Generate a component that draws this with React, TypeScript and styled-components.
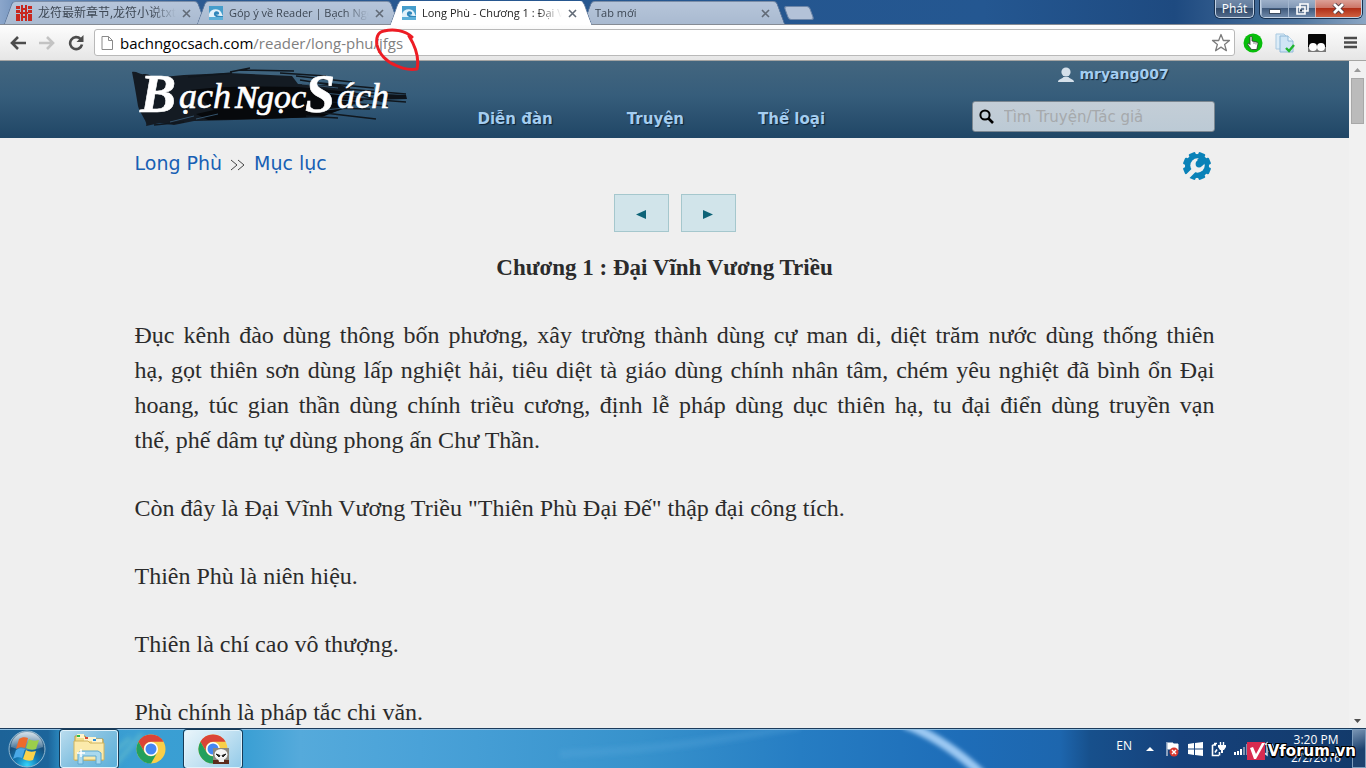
import React from "react";
import styled, { createGlobalStyle } from "styled-components";

const ui = `"Open Sans", "Noto Sans", "Noto Sans CJK SC", sans-serif`;
const wide = `"DejaVu Sans", Verdana, sans-serif`;
const serif = `"Palatino Linotype", "Liberation Serif", serif`;

const Global = createGlobalStyle`
  *, *::before, *::after { box-sizing: border-box; }
  body { margin: 0; overflow: hidden; background: #efefef; }
  button { border: 0; padding: 0; margin: 0; background: none; font: inherit; color: inherit; cursor: pointer; }
  a { text-decoration: none; color: inherit; }
  svg { display: block; flex: none; }
`;

const Desktop = styled.div`
  position: relative;
  display: flex;
  flex-direction: column;
  height: 100vh;
  overflow: hidden;
  font-family: ${ui};
`;

/* ---------- window frame and tabs ---------- */
const TabStrip = styled.header`
  display: flex;
  flex: none;
  height: 25px;
  padding-left: 8px;
  background: linear-gradient(90deg, #8ba6cb 0, #6f90bb 20px, #2c5a92 190px, #25568f 50%, #245791 72%, #1e4a80 86%, #4e759f 95%, #8ba6c4 100%);
  border-bottom: 1px solid #858b94;
`;

const Tab = styled.div<{ $active?: boolean }>`
  position: relative;
  z-index: ${(p) => (p.$active ? 2 : 1)};
  display: flex;
  align-items: center;
  gap: 6px;
  width: 193px;
  height: 25px;
  padding: 1px 10px 0 8px;
  color: ${(p) => (p.$active ? "#222" : "#3d4754")};
  &::before, &::after {
    content: "";
    position: absolute;
    z-index: -1;
    top: 1px;
    bottom: ${(p) => (p.$active ? "0" : "1px")};
    background: ${(p) => (p.$active ? "#fff" : "linear-gradient(#b6c5da, #a9bad0)")};
    border-top: 1px solid ${(p) => (p.$active ? "#fff" : "#7c8ea8")};
  }
  &::before {
    left: 0;
    width: 65%;
    transform: skewX(-20deg);
    border-left: 1px solid #60789a;
    border-radius: 4px 0 0 0;
  }
  &::after {
    right: -1px;
    width: 54%;
    transform: skewX(20deg);
    border-right: 1px solid #60789a;
    border-radius: 0 4px 0 0;
  }
`;

const TabLabel = styled.button<{ $large?: boolean }>`
  flex: 1;
  height: 20px;
  overflow: hidden;
  font-size: ${(p) => (p.$large ? "12px" : "11px")};
  line-height: 20px;
  text-align: left;
  white-space: nowrap;
  mask-image: linear-gradient(90deg, #000 82%, transparent);
`;

const NewTab = styled.button`
  width: 26px;
  height: 14px;
  margin: 6px 0 0 6px;
  background: #b3c2d8;
  border: 1px solid #6d86a8;
  border-radius: 3px;
  transform: skewX(20deg);
`;

const WindowButtons = styled.div`
  display: flex;
  margin: 0 4px 0 auto;
  height: 18px;
  color: #fff;
  font-size: 12px;
`;

const UserBadge = styled.button`
  width: 39px;
  margin-right: 6px;
  background: linear-gradient(#7189a8 0, #5d7899 50%, #2f4868 50%, #51698a);
  border: 1px solid #c3d2e4;
  border-top: 0;
  border-radius: 0 0 5px 5px;
  box-shadow: 0 0 0 1px #17304f;
  line-height: 16px;
`;

const FrameGroup = styled.div`
  display: flex;
  border: 1px solid #c3d2e4;
  border-top: 0;
  border-radius: 0 0 5px 5px;
  box-shadow: 0 0 0 1px #17304f;
  overflow: hidden;
`;

const FrameButton = styled.button<{ $close?: boolean }>`
  display: grid;
  place-items: center;
  width: ${(p) => (p.$close ? "46px" : "27px")};
  border-left: ${(p) => (p.$close ? "1px solid #e0b0a8" : "1px solid #a3b6ce")};
  background: ${(p) =>
    p.$close
      ? "linear-gradient(#dca097 0, #cb7263 50%, #b02f18 50%, #cf6040)"
      : "linear-gradient(#9db0c9 0, #7f96b4 50%, #405a7c 50%, #6d87a8)"};
`;

/* ---------- toolbar ---------- */
const Toolbar = styled.nav`
  display: flex;
  align-items: center;
  flex: none;
  height: 36px;
  padding: 0 6px 0 8px;
  background: linear-gradient(#fdfdfd, #e6e6e6);
  border-bottom: 1px solid #a5a5a3;
`;

const ToolButton = styled.button<{ $gap?: number }>`
  display: grid;
  place-items: center;
  width: 20px;
  height: 24px;
  margin-right: ${(p) => p.$gap ?? 9}px;
`;

const AddressBox = styled.form`
  position: relative;
  display: flex;
  align-items: center;
  flex: 1;
  height: 27px;
  margin: 0 8px 0 1px;
  padding: 0 3px 0 6px;
  background: #fff;
  border: 1px solid #b9b9b9;
  border-radius: 3px;
`;

const Address = styled.span`
  flex: 1;
  margin-left: 6px;
  color: #000;
  font-size: 15px;
  line-height: 24px;
  white-space: nowrap;
  span { color: #7f7f7f; }
`;

const InkRing = styled.svg`
  position: absolute;
  z-index: 5;
  left: 278px;
  top: -2px;
  pointer-events: none;
`;

/* ---------- web page ---------- */
const Viewport = styled.div`
  display: flex;
  flex: 1;
  min-height: 0;
`;

const Page = styled.div`
  flex: 1;
  overflow: hidden;
  background: #efefef;
`;

const SiteHeader = styled.header`
  height: 77px;
  background: linear-gradient(#43667f, #365d7b 45%, #204666);
  font-family: ${wide};
`;

const HeaderInner = styled.div`
  display: flex;
  max-width: 1080px;
  height: 77px;
  margin: 0 auto;
`;

const Logo = styled.a`
  width: 280px;
  margin: 3px 0 0 -5px;
`;

const SiteNav = styled.nav`
  display: flex;
  align-items: flex-end;
  gap: 74px;
  margin-left: 68px;
  padding-bottom: 9px;
`;

const headerText = `
  color: #a4cdf0;
  font-weight: bold;
  line-height: 20px;
  text-shadow: 1px 1px 1px #0c2135;
`;

const NavLink = styled.a`
  ${headerText}
  font-size: 15px;
`;

const Account = styled.div`
  display: flex;
  flex-direction: column;
  width: 243px;
  margin-left: auto;
  padding-top: 3px;
`;

const UserLink = styled.a`
  ${headerText}
  display: flex;
  align-items: center;
  gap: 6px;
  margin-left: 86px;
  font-size: 14px;
`;

const SearchBox = styled.label`
  display: flex;
  align-items: center;
  gap: 10px;
  height: 31px;
  margin-top: 17px;
  padding: 0 6px;
  background: linear-gradient(#c4ced7, #bccad5);
  border: 1px solid #7b8791;
  border-radius: 3px;
`;

const SearchInput = styled.input`
  flex: 1;
  min-width: 0;
  padding: 0;
  background: none;
  border: 0;
  outline: 0;
  font-family: ${wide};
  font-size: 15px;
  &::placeholder { color: #a6a9ac; opacity: 1; }
`;

const Reader = styled.main`
  max-width: 1080px;
  margin: 0 auto;
  padding-top: 14px;
`;

const ReaderTop = styled.div`
  display: flex;
  justify-content: space-between;
  height: 28px;
  padding-right: 4px;
`;

const Crumbs = styled.nav`
  display: flex;
  gap: 8px;
  color: #4a4a4a;
  font-family: ${wide};
  font-size: 19px;
  line-height: 22px;
  a { color: #175fb4; }
  svg { margin-top: 7px; }
`;

const Pager = styled.div`
  display: flex;
  justify-content: center;
  gap: 12px;
  margin-top: 14px;
`;

const PagerButton = styled.button`
  display: grid;
  place-items: center;
  width: 55px;
  height: 38px;
  padding-top: 3px;
  background: #d1e4ea;
  border: 1px solid #a5c7cd;
`;

const Chapter = styled.article`
  color: #2b2b2b;
  font-family: ${serif};
  font-size: 24px;
  line-height: 35px;
`;

const ChapterTitle = styled.h1`
  margin: 18px 0 33px;
  padding-right: 20px;
  font-size: 23px;
  line-height: 35px;
  text-align: center;
`;

const Paragraph = styled.p`
  margin: 0 0 33px;
`;

const Justified = styled.span`
  display: block;
  text-align: justify;
  text-align-last: justify;
`;

const ScrollTrack = styled.div`
  display: flex;
  flex-direction: column;
  align-items: center;
  flex: none;
  width: 17px;
  padding: 7px 0 5px;
  background: #f1f1f1;
`;

const ScrollThumb = styled.div`
  width: 13px;
  height: 46px;
  margin: 6px 0 auto;
  background: #bbb;
  border: 1px solid #a8a8a8;
`;

/* ---------- taskbar ---------- */
const Taskbar = styled.footer`
  position: relative;
  display: flex;
  align-items: center;
  flex: none;
  height: 40px;
  border-top: 1px solid #1c3c5c;
  box-shadow: inset 0 1px 0 #8fbfe2;
  background: linear-gradient(90deg, #1d6398 0, #1c659b 48px, #2f93c9 64px, #3b9fd3 130px, #389ed3 240px, #55aadb 300px, #4aa2d8 420px, #3792cc 640px, #267dc3 800px, #1e6db8 960px, #1d66ae 1060px, #17508c 1090px, #16417b 1180px, #123a6a 100%);
`;

const Swoosh = styled.svg`
  position: absolute;
  top: 1px;
  left: 0;
`;

const TaskItem = styled.button<{ $state?: "open" | "active" }>`
  position: relative;
  display: grid;
  place-items: center;
  width: 58px;
  height: 38px;
  margin-right: 4px;
  border: 1px solid ${(p) => (p.$state ? "#e0f2fb" : "transparent")};
  border-radius: 3px;
  box-shadow: ${(p) => (p.$state ? "0 0 0 1px #173b57" : "none")};
  background: ${(p) =>
    p.$state === "active"
      ? "linear-gradient(135deg, #e9f5fb 0, #c3e2f2 50%, #94cbe9)"
      : p.$state === "open"
      ? "linear-gradient(135deg, #b9dcee 0, #86c2e1 45%, #5cb0da)"
      : "none"};
`;

const StartButton = styled.button`
  position: relative;
  margin: 0 14px 0 8px;
`;

const Tray = styled.div`
  position: relative;
  display: flex;
  align-items: center;
  height: 39px;
  margin-left: auto;
  color: #fff;
  font-size: 12px;
`;

const Language = styled.button`
  margin: 0 14px 6px 0;
  font-size: 12px;
`;

const TrayIcons = styled.div`
  display: flex;
  align-items: center;
  gap: 8px;
`;

const Clock = styled.time`
  display: flex;
  flex-direction: column;
  align-items: center;
  width: 76px;
  padding-left: 4px;
  line-height: 18px;
  font-size: 12px;
`;

const ShowDesktop = styled.button`
  width: 14px;
  height: 39px;
  border: 1px solid #7d9dbd;
  background: linear-gradient(160deg, #7894b3, #1d426f 55%);
`;

const Watermark = styled.div`
  position: absolute;
  right: 10px;
  bottom: 7px;
  display: flex;
  align-items: center;
  gap: 3px;
  color: #fff;
  font: bold 15px/20px ${wide};
  text-shadow: -1px -1px #000, 1px -1px #000, -1px 1px #000, 1px 1px #000, 0 2px #000;
`;

/* ---------- drawings ---------- */
const SiteIcon = () => (
  <svg width="14" height="14" viewBox="0 0 14 14">
    <rect width="14" height="14" fill="#459dcb" />
    <path d="M0 8C1 4 6 2 10 4c3 2 3 5 4 6v1H0Z" fill="#e1f1fa" />
    <path d="M5 7c1-3 6-2 5 1-1 1-2 1-3 0 1 2 4 2 7 2v2c-5 0-10-1-9-5Z" fill="#2f86ba" />
    <path d="M0 11h14v3H0z" fill="#5cafd8" />
  </svg>
);

const SealIcon = () => (
  <svg width="16" height="16" viewBox="0 0 16 16">
    <path d="M0 1h4v3H0zM0 5h4v3H0zM0 9h4v7H0zM5 0h2v7H5zM9 0h2v7H9zM12 1h4v3h-4zM12 5h4v3h-4zM12 9h4v7h-4zM4 7h8v2H4zM5 9h2v7H5zM9 9h2v7H9zM7 3h2v2H7zM7 11h2v2H7z" fill="#c8281f" />
  </svg>
);

const CloseIcon = () => (
  <svg width="9" height="9" viewBox="0 0 9 9">
    <path d="m1 1 7 7M8 1 1 8" stroke="#626b77" strokeWidth="1.6" />
  </svg>
);

const CursorHand = () => (
  <svg width="20" height="20" viewBox="0 0 20 20">
    <circle cx="10" cy="10" r="9.5" fill="#07bd0b" />
    <path d="M7 4.500c0-1.500 2-1.500 2 0V8l5 1.200c1 .3 1 1 .9 2L13.800 16.500H8.500L5 12c-.8-1.500.6-2 1.300-1.200L7 11.500Z" fill="#fff" stroke="#333" strokeWidth=".8" />
    <path d="M11 9v2M13 9.500v2" stroke="#555" strokeWidth=".7" />
  </svg>
);

const CopyCheck = () => (
  <svg width="20" height="20" viewBox="0 0 20 20">
    <path d="M1 1h8l3 3v12H1Z" fill="#dcecf7" stroke="#a9c9e1" />
    <path d="M5 3h8l5 5v11H5Z" fill="#cfe5f5" stroke="#8eb8d8" />
    <path d="M13 3v5h5" fill="#eff8fd" stroke="#8eb8d8" />
    <path d="m11 15 3 3 5-6" fill="none" stroke="#20b52e" strokeWidth="2.400" />
  </svg>
);

const DarkEyes = () => (
  <svg width="18" height="18" viewBox="0 0 18 18">
    <rect width="18" height="18" rx="1" fill="#060606" />
    <path d="M0 13h18v5H0z" fill="#777" />
    <circle cx="5" cy="13" r="4" fill="#fff" />
    <circle cx="13" cy="13" r="4" fill="#fff" />
  </svg>
);

const BrushLogo = () => (
  <svg width="280" height="64" viewBox="0 0 280 64">
    <path d="M2 8c5-1 8 3 12 2 4 0 7 1 8 4l32-3 44-2 64 3 6 8 44 2 16 9-8 12-32 10-84 3-40 1-20 4-14-2-14 3C18 58 10 50 8 42 6 30 4 18 2 8Z" fill="#141b23" />
    <path d="M60 26c30-4 70-4 108-3l52 5 14 8-22 9-20 8-60 2-54 1-12-6 18-4Z" fill="#07090c" />
    <path d="M100 8l20-4M110 6l54 1M150 9l46 3M166 12l56 6M170 16l50 8M190 19l54 5M204 24l72 6M214 29l62 3M208 33l68 5M200 38l58 4M192 44l48 1M186 48l60 7M176 52l32 2M214 26l40 12M54 58l-30 3M58 13l44-4" fill="none" stroke="#10171e" strokeWidth="1.600" />
    <path d="M246 30l30 1 1 4-36 1Z" fill="#0d131a" />
    <path d="M172 20l36 4M184 28l50 5M196 46l26-3M208 36l30 2M40 58l24-6M66 55l22-5" fill="none" stroke="#33526b" strokeWidth="1" />
    <g fill="#fff" stroke="#fff" strokeWidth=".6" fontFamily="Liberation Serif, serif" fontStyle="italic">
      <text x="10" y="48" fontSize="54" fontWeight="bold">B</text>
      <text x="49" y="44" fontSize="36">ạch</text>
      <text x="105" y="44" fontSize="32" fontWeight="bold">N</text>
      <text x="127" y="44" fontSize="34">gọc</text>
      <text x="175" y="48" fontSize="54" fontWeight="bold">S</text>
      <text x="207" y="44" fontSize="36">ách</text>
    </g>
  </svg>
);

const SettingsGear = () => (
  <svg width="28" height="28" viewBox="0 0 28 28">
    <g fill="#0a82b8">
      <circle cx="14" cy="14" r="12" />
      {[0, 45, 90, 135, 180, 225, 270, 315].map((a) => (
        <rect key={a} x="10.500" y="0" width="7" height="6" rx="1.200" transform={`rotate(${a + 22.5} 14 14)`} />
      ))}
    </g>
    <circle cx="14.500" cy="13.500" r="7.200" fill="#efefef" />
    <path d="M13 16 4 25" stroke="#efefef" strokeWidth="5" strokeLinecap="round" />
    <circle cx="16" cy="12" r="3.400" fill="#0a82b8" />
    <path d="m14 8 5-5 6 6-6 5Z" fill="#0a82b8" />
  </svg>
);

const ChromeLogo = () => (
  <svg width="30" height="30" viewBox="0 0 30 30">
    <circle cx="15" cy="15" r="14.500" fill="#f9cf48" />
    <path d="M2.440 7.750A14.500 14.500 0 0 1 27.560 7.750H15a7.250 7.250 0 0 0-6.280 10.870Z" fill="#db4437" />
    <path d="M2.440 7.750 8.720 18.620A7.250 7.250 0 0 0 21.280 18.620L15 29.500A14.500 14.500 0 0 1 2.440 7.750Z" fill="#23a05d" />
    <circle cx="15" cy="15" r="7" fill="#fff" />
    <circle cx="15" cy="15" r="5.500" fill="#4587f3" />
  </svg>
);

const AvatarBadge = styled.svg`
  position: absolute;
  right: 12px;
  bottom: 3px;
`;

const FolderIcon = () => (
  <svg width="34" height="32" viewBox="0 0 34 32">
    <path d="M3 3h10l2 3h16v21H3Z" fill="#f2dc8a" stroke="#b99b45" />
    <path d="M5 1h7v4H5z" fill="#fff4cd" /><path d="M5 2h3v2H5z" fill="#2bbd46" />
    <path d="M12 4h12v4H12z" fill="#fff4cd" /><path d="M13 4h3v2h-3z" fill="#d54b36" />
    <path d="M20 6h10v4H20z" fill="#fff4cd" /><path d="M21 6h3v2h-3z" fill="#2c8edc" />
    <path d="M2 8h14l2 2h14v17H2Z" fill="#fbeaab" stroke="#d0b45f" />
    <path d="M6 31V20l3-2h17l3 2v11h-5v-8H11v8Z" fill="#a9d9ef" stroke="#5fa8cf" />
    <path d="M9 16v8M5 20h8" stroke="#fff" strokeWidth="1.500" />
  </svg>
);

const StartOrb = () => (
  <svg width="38" height="38" viewBox="0 0 38 38">
    <defs>
      <radialGradient id="orb" cx=".5" cy=".95" r=".9">
        <stop offset="0" stopColor="#34d5fb" />
        <stop offset=".35" stopColor="#147ab4" />
        <stop offset=".7" stopColor="#174f7c" />
        <stop offset="1" stopColor="#6c8ba4" />
      </radialGradient>
      <linearGradient id="shine" x2="0" y2="1">
        <stop stopColor="#e8f0f5" stopOpacity=".85" />
        <stop offset="1" stopColor="#c0d4e2" stopOpacity=".25" />
      </linearGradient>
    </defs>
    <circle cx="19" cy="19" r="18" fill="url(#orb)" stroke="#92b9d1" />
    <path d="M3 17a16 15 0 0 1 32 0c-10 4-22 4-32 0Z" fill="url(#shine)" />
    <path d="M11 9c3-2 6-2 9-1l-3 10c-3-1-6-1-9 1Z" fill="#ed6a2c" />
    <path d="M21 9c3 2 6 2 10 1l-3 9c-3 1-6 1-10-1Z" fill="#9bce4b" />
    <path d="M8 20c3-2 6-2 9-1l-3 9c-3-1-6-1-9 1Z" fill="#4aa8e6" />
    <path d="M18 20c3 2 6 2 10 1l-3 9c-3 1-6 1-10-1Z" fill="#fbd34b" />
  </svg>
);

export default function App() {
  return (
    <Desktop>
      <Global />
      <TabStrip>
        <Tab><SealIcon /><TabLabel $large>龙符最新章节,龙符小说txt下载</TabLabel><button aria-label="Close tab"><CloseIcon /></button></Tab>
        <Tab><SiteIcon /><TabLabel>Góp ý về Reader | Bạch Ngọc Sách</TabLabel><button aria-label="Close tab"><CloseIcon /></button></Tab>
        <Tab $active><SiteIcon /><TabLabel>Long Phù - Chương 1 : Đại Vĩnh</TabLabel><button aria-label="Close tab"><CloseIcon /></button></Tab>
        <Tab><TabLabel>Tab mới</TabLabel><button aria-label="Close tab"><CloseIcon /></button></Tab>
        <NewTab aria-label="New tab" />
        <WindowButtons>
          <UserBadge>Phát</UserBadge>
          <FrameGroup>
            <FrameButton aria-label="Minimize"><svg width="12" height="10"><rect x=".5" y="5.500" width="11" height="4" fill="#fff" stroke="#3c4c60" /></svg></FrameButton>
            <FrameButton aria-label="Restore"><svg width="13" height="12"><path d="M4 1h8v7H4zM1 4h8v7H1z" fill="#697f9b" stroke="#fff" strokeWidth="1.600" /><path d="M4 6.500h2v2H4z" fill="#26364a" /></svg></FrameButton>
            <FrameButton $close aria-label="Close"><svg width="13" height="11"><path d="m2 1 9 9M11 1 2 10" stroke="#4f3a40" strokeWidth="4.500" /><path d="m2 1 9 9M11 1 2 10" stroke="#fff" strokeWidth="2.800" /></svg></FrameButton>
          </FrameGroup>
        </WindowButtons>
      </TabStrip>

      <Toolbar>
        <ToolButton aria-label="Back"><svg width="16" height="14"><path d="M8 1 2 7l6 6M2 7h14" fill="none" stroke="#4c4c4c" strokeWidth="2.600" /></svg></ToolButton>
        <ToolButton aria-label="Forward"><svg width="16" height="14"><path d="m8 1 6 6-6 6M14 7H0" fill="none" stroke="#c3c3c3" strokeWidth="2.600" /></svg></ToolButton>
        <ToolButton aria-label="Reload" $gap={7}><svg width="16" height="16"><path d="M12.500 4A6 6 0 1 0 14 9.500" fill="none" stroke="#4c4c4c" strokeWidth="2.600" /><path d="M15.500 0v7H8.500Z" fill="#4c4c4c" /></svg></ToolButton>
        <AddressBox onSubmit={(e) => e.preventDefault()}>
          <svg width="13" height="16"><path d="M1 1.500h6.500l4 4v9H1Z" fill="#fff" stroke="#8a8a8a" /><path d="M7.500 1.500v4h4" fill="none" stroke="#8a8a8a" /></svg>
          <Address>bachngocsach.com<span>/reader/long-phu/jfgs</span></Address>
          <button type="button" aria-label="Bookmark"><svg width="20" height="20" viewBox="0 0 20 20"><path d="m10 1.500 2.300 6h6.200l-4.900 3.900 1.800 6.300L10 14.100l-5.400 3.600 1.800-6.300L1.500 7.500h6.200Z" fill="#fff" stroke="#7c7c7c" strokeWidth="1.300" strokeLinejoin="round" /></svg></button>
          <InkRing width="50" height="46" viewBox="0 0 50 46">
            <path d="M39 9C32 2 20 1 11 3 4 4 3 11 4 17c2 9 10 17 18 20 8 4 16 5 22 4 2-9 0-20-8-33" fill="none" stroke="#ed1c24" strokeWidth="3" strokeLinecap="round" strokeLinejoin="round" />
          </InkRing>
        </AddressBox>
        <ToolButton aria-label="Adblock" $gap={12}><CursorHand /></ToolButton>
        <ToolButton aria-label="Copy" $gap={12}><CopyCheck /></ToolButton>
        <ToolButton aria-label="Tampermonkey" $gap={13}><DarkEyes /></ToolButton>
        <ToolButton aria-label="Menu" $gap={0}><svg width="13" height="13"><path d="M0 2h13M0 6.500h13M0 11h13" stroke="#4b4b4b" strokeWidth="2.600" /></svg></ToolButton>
      </Toolbar>

      <Viewport>
        <Page>
          <SiteHeader>
            <HeaderInner>
              <Logo href="#" aria-label="Bạch Ngọc Sách"><BrushLogo /></Logo>
              <SiteNav>
                <NavLink href="#">Diễn đàn</NavLink>
                <NavLink href="#">Truyện</NavLink>
                <NavLink href="#">Thể loại</NavLink>
              </SiteNav>
              <Account>
                <UserLink href="#">
                  <svg width="16" height="15"><circle cx="8" cy="5" r="4.600" fill="#d5e0ea" /><path d="M0 15c0-3 4-3 5.500-5h5C12 12 16 12 16 15Z" fill="#d5e0ea" /></svg>
                  mryang007
                </UserLink>
                <SearchBox>
                  <svg width="15" height="15"><circle cx="6" cy="6" r="4.600" fill="none" stroke="#000" strokeWidth="2" /><path d="m9 9 5 5" stroke="#000" strokeWidth="2.600" /></svg>
                  <SearchInput aria-label="Tìm Truyện/Tác giả" placeholder="Tìm Truyện/Tác giả" />
                </SearchBox>
              </Account>
            </HeaderInner>
          </SiteHeader>

          <Reader>
            <ReaderTop>
              <Crumbs>
                <a href="#">Long Phù</a>
                <svg width="16" height="12"><path d="m1 1 6 5-6 5M8 1l6 5-6 5" fill="none" stroke="#444" /></svg>
                <a href="#">Mục lục</a>
              </Crumbs>
              <button aria-label="Settings"><SettingsGear /></button>
            </ReaderTop>
            <Pager>
              <PagerButton aria-label="Previous chapter"><svg width="10" height="10"><path d="M10 0v9L0 4.500Z" fill="#0d6377" /></svg></PagerButton>
              <PagerButton aria-label="Next chapter"><svg width="10" height="10"><path d="M0 0v9l10-4.500Z" fill="#0d6377" /></svg></PagerButton>
            </Pager>
            <Chapter>
              <ChapterTitle>Chương 1 : Đại Vĩnh Vương Triều</ChapterTitle>
              <Paragraph>
                <Justified>Đục kênh đào dùng thông bốn phương, xây trường thành dùng cự man di, diệt trăm nước dùng thống thiên</Justified>
                <Justified>hạ, gọt thiên sơn dùng lấp nghiệt hải, tiêu diệt tà giáo dùng chính nhân tâm, chém yêu nghiệt đã bình ổn Đại</Justified>
                <Justified>hoang, túc gian thần dùng chính triều cương, định lễ pháp dùng dục thiên hạ, tu đại điển dùng truyền vạn</Justified>
                thế, phế dâm tự dùng phong ấn Chư Thần.
              </Paragraph>
              <Paragraph>Còn đây là Đại Vĩnh Vương Triều "Thiên Phù Đại Đế" thập đại công tích.</Paragraph>
              <Paragraph>Thiên Phù là niên hiệu.</Paragraph>
              <Paragraph>Thiên là chí cao vô thượng.</Paragraph>
              <Paragraph>Phù chính là pháp tắc chi văn.</Paragraph>
            </Chapter>
          </Reader>
        </Page>
        <ScrollTrack>
          <svg width="7" height="4"><path d="M0 4 3.500 0 7 4Z" fill="#999" /></svg>
          <ScrollThumb />
          <svg width="7" height="4"><path d="M0 0h7L3.500 4Z" fill="#505050" /></svg>
        </ScrollTrack>
      </Viewport>

      <Taskbar>
        <Swoosh width="1100" height="38" viewBox="0 0 1100 38">
          <defs>
            <filter id="soft" x="-20%" y="-50%" width="140%" height="200%"><feGaussianBlur stdDeviation="2" /></filter>
          </defs>
          <path d="M904 -6C932 4 958 22 982 44" fill="none" stroke="#9cc9f3" strokeWidth="9" filter="url(#soft)" />
          <path d="M560 24C660 20 720 10 800 -4" fill="none" stroke="#5fabdf" strokeOpacity=".25" strokeWidth="8" filter="url(#soft)" />
          <path d="M96 38 130 8M112 38l30-34" fill="none" stroke="#7fd0c8" strokeOpacity=".35" strokeWidth="5" filter="url(#soft)" />
        </Swoosh>
        <StartButton aria-label="Start"><StartOrb /></StartButton>
        <TaskItem $state="open" aria-label="Explorer"><FolderIcon /></TaskItem>
        <TaskItem aria-label="Chrome"><ChromeLogo /></TaskItem>
        <TaskItem $state="active" aria-label="Chrome window">
          <ChromeLogo />
          <AvatarBadge width="16" height="16">
            <rect width="16" height="16" fill="#8b8880" />
            <path d="M0 12h16v4H0z" fill="#5c2b1c" />
            <ellipse cx="8" cy="6.500" rx="6.500" ry="5.500" fill="#f5f5f5" />
            <path d="M5 10h6v4H6Z" fill="#eee" />
            <path d="M3 6l4 1.500-1 1.500ZM13 6 9 7.500 10 9Z" fill="#222" stroke="#222" />
          </AvatarBadge>
        </TaskItem>
        <Tray>
          <Language>EN</Language>
          <TrayIcons>
            <svg width="8" height="6"><path d="M0 5 4 1l4 4Z" fill="#fff" /></svg>
            <svg width="18" height="16"><path d="M5 1v14M6 2h5v1h5v6h-5V8H6Z" fill="#fff" stroke="#fff" /><circle cx="12" cy="11" r="4.500" fill="#d93a30" /><path d="m10 9 4 4m0-4-4 4" stroke="#fff" strokeWidth="1.400" /></svg>
            <svg width="15" height="14"><path d="m0 2 6-1v5.500H0zM7 1l8-1v6.500H7zM0 7.500h6V13l-6-1zM7 7.500h8V14l-8-1z" fill="#fff" /></svg>
            <svg width="15" height="16"><path d="M3 2.500h3M1.500 4H5M1.500 4v10.500H8M8.500 11v3.500M4 11.500l2-3" fill="none" stroke="#fff" strokeWidth="1.600" /><path d="M9.500 1v3M12.500 1v3" stroke="#fff" strokeWidth="1.400" /><path d="M7 4h8v2l-2 3h-1v3h-2V9H9L7 6Z" fill="#fff" /></svg>
            <svg width="16" height="12"><path d="M0 9h2v3H0zM3 8h2v4H3zM6 6h2v6H6z" fill="#fff" /><path d="M9 4h2v8H9zM12 1h2v11h-2z" fill="#8195b1" /></svg>
            <svg width="18" height="16"><path d="M1 6h3l5-4v12l-5-4H1ZM11 5q2 3 0 6M14 3q3 5 0 10" fill="none" stroke="#dce7f3" strokeWidth="1.400" /></svg>
          </TrayIcons>
          <Clock><span>3:20 PM</span><span>2/2/2016</span></Clock>
          <ShowDesktop aria-label="Show desktop" />
          <Watermark>
            <svg width="18" height="18"><rect width="18" height="18" fill="#d82b50" /><path d="m3 6 3-1 3 7L15 1h3L9 17H7Z" fill="#fff" /></svg>
            Vforum.vn
          </Watermark>
        </Tray>
      </Taskbar>
    </Desktop>
  );
}
